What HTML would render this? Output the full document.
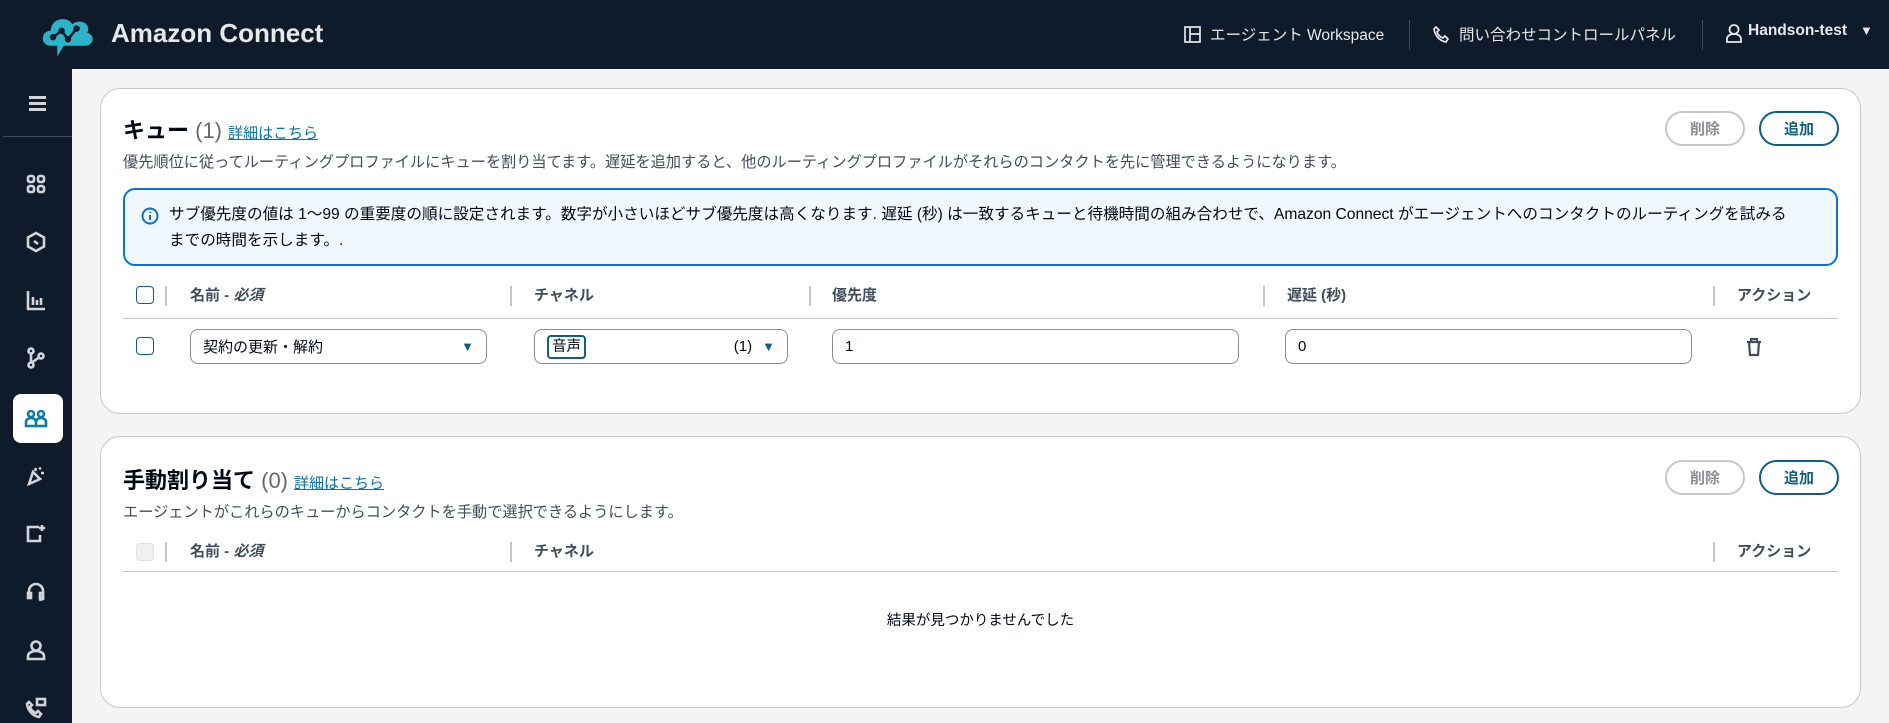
<!DOCTYPE html>
<html><head><meta charset="utf-8"><style>
*{box-sizing:border-box;margin:0;padding:0}
body{width:1889px;height:723px;overflow:hidden;background:#f4f4f4;font-family:"Liberation Sans","Noto Sans CJK JP",sans-serif;color:#000716;position:relative}
.a{position:absolute;white-space:nowrap}
#hdr{left:0;top:0;width:1889px;height:69px;background:#0f1b2a}
#side{left:0;top:69px;width:72px;height:654px;background:#0f1b2a}
.ic{position:absolute;left:24px;width:24px;height:24px}
.card{background:#fff;border:1px solid #c6c6cd;border-radius:20px}
.h2{font-size:22px;font-weight:bold}
.cnt{font-weight:normal;color:#656871}
.lnk{font-size:15px;color:#0972a8;text-decoration:underline;font-weight:normal;margin-left:6px}
.desc{font-size:15.2px;color:#414d5c}
.btn{border-radius:20px;font-size:15px;font-weight:bold;display:flex;align-items:center;justify-content:center;height:35px;width:80px}
.th{font-size:15px;font-weight:bold;color:#414d5c}
.sep{width:2px;height:20px;background:#c6c6cd}
.inp{border:1px solid #8c8c94;border-radius:8px;height:35px;font-size:15px;padding:0 12px;display:flex;align-items:center}
.cb{width:18px;height:18px;border:1.5px solid #0f5f7e;border-radius:4px}
</style></head><body>
<div id="hdr" class="a">
 <svg class="a" style="left:38px;top:8px" width="60" height="54" viewBox="0 0 56 48"><path d="M12 34 C2 34 2 20 12 20 C12 8 28 6 32 14 C40 8 50 14 46 22 C54 24 52 34 44 34 L24 34 L18 44 L18 34 Z" fill="#2bb4c6"/><path d="M14 26 L22 20 L28 28 L36 18" stroke="#0f1b2a" stroke-width="2.5" fill="none"/><circle cx="14" cy="26" r="3" fill="#0f1b2a"/><circle cx="22" cy="20" r="3" fill="#0f1b2a"/><circle cx="28" cy="28" r="3" fill="#0f1b2a"/><circle cx="36" cy="18" r="3" fill="#0f1b2a"/></svg>
 <div class="a" style="left:111px;top:18px;font-size:26px;font-weight:bold;color:#e6e8ea">Amazon Connect</div>
 <svg class="a" style="left:1184px;top:26px" width="17" height="17" viewBox="0 0 17 17" fill="none" stroke="#e6e8ea" stroke-width="1.7"><rect x="1" y="1" width="15" height="15"/><path d="M6 1v15M6 8h10"/></svg>
 <div class="a" style="left:1210px;top:23px;font-size:15.5px;color:#e6e8ea">エージェント Workspace</div>
 <div class="a" style="left:1409px;top:20px;width:1px;height:30px;background:#414d5c"></div>
 <svg class="a" style="left:1433px;top:26px" width="17" height="17" viewBox="0 0 17 17" fill="none" stroke="#e6e8ea" stroke-width="1.7"><path d="M3 1l3 3-2 2c1 3 3 5 6 6l2-2 3 3-2 3C7 15 2 10 1 3z"/></svg>
 <div class="a" style="left:1459px;top:23px;font-size:15.5px;color:#e6e8ea">問い合わせコントロールパネル</div>
 <div class="a" style="left:1702px;top:20px;width:1px;height:30px;background:#414d5c"></div>
 <svg class="a" style="left:1726px;top:24px" width="16" height="19" viewBox="0 0 16 19" fill="none" stroke="#e6e8ea" stroke-width="1.8"><circle cx="8" cy="5.5" r="4.5"/><path d="M1 18v-3c0-3 3-5 7-5s7 2 7 5v3z"/></svg>
 <div class="a" style="left:1748px;top:22px;font-size:15.5px;font-weight:bold;color:#e6e8ea">Handson-test</div>
 <div class="a" style="left:1860px;top:23px;font-size:13px;color:#e6e8ea">▼</div>
</div>
<div id="side" class="a">
 <div class="a" style="left:29px;top:27px;width:17px;height:2.5px;background:#d1d5db;box-shadow:0 6px 0 #d1d5db,0 12px 0 #d1d5db"></div>
 <div class="a" style="left:3px;top:67px;width:69px;height:1px;background:#414d5c"></div>
 <svg class="ic" style="top:103px" viewBox="0 0 24 24" fill="none" stroke="#d1d5db" stroke-width="2.6"><rect x="4" y="4" width="6" height="6" rx="2"/><rect x="14" y="4" width="6" height="6" rx="2"/><rect x="4" y="14" width="6" height="6" rx="2"/><rect x="14" y="14" width="6" height="6" rx="2"/></svg>
 <svg class="ic" style="top:161px" viewBox="0 0 24 24" fill="none" stroke="#d1d5db" stroke-width="2.6"><path d="M12 3l8 4.5v9L12 21l-8-4.5v-9z"/><path d="M10 11l4 3"/></svg>
 <svg class="ic" style="top:219px" viewBox="0 0 24 24" fill="none" stroke="#d1d5db" stroke-width="2.6"><path d="M4 3v18h17M9 17V9M13 17v-5M17 17v-7"/></svg>
 <svg class="ic" style="top:277px" viewBox="0 0 24 24" fill="none" stroke="#d1d5db" stroke-width="2.6"><circle cx="7" cy="5" r="2.5"/><circle cx="7" cy="19" r="2.5"/><circle cx="17" cy="10" r="2.5"/><path d="M7 7.5v9M15 11.5l-7 5"/></svg>
 <div class="a" style="left:13px;top:325px;width:50px;height:49px;background:#fff;border-radius:8px"></div>
 <svg class="ic" style="top:337px" viewBox="0 0 24 24" fill="none" stroke="#0f7ba0" stroke-width="2.6"><circle cx="7" cy="8" r="3"/><circle cx="17" cy="8" r="3"/><path d="M2 20v-4c0-2 2-4 5-4s5 2 5 4v4zM12 20v-4c0-2 2-4 5-4s5 2 5 4v4z"/></svg>
 <svg class="ic" style="top:395px" viewBox="0 0 24 24" fill="none" stroke="#d1d5db" stroke-width="2.6"><path d="M5 20l4-12 7 7zM12 4l-1 3M17 9h3M15 5l2-1"/></svg>
 <svg class="ic" style="top:453px" viewBox="0 0 24 24" fill="none" stroke="#d1d5db" stroke-width="2.6"><path d="M15 5H4v14h12v-6"/><path d="M18 3v6M15 6h6"/></svg>
 <svg class="ic" style="top:511px" viewBox="0 0 24 24" fill="none" stroke="#d1d5db" stroke-width="2.6"><path d="M5 17v-6a7 7 0 0114 0v8l-4 1"/><rect x="4" y="13" width="3" height="5"/><rect x="16" y="13" width="3" height="5"/></svg>
 <svg class="ic" style="top:569px" viewBox="0 0 24 24" fill="none" stroke="#d1d5db" stroke-width="2.6"><circle cx="12" cy="8" r="4.5"/><path d="M4 21v-3c0-3 4-5 8-5s8 2 8 5v3z"/></svg>
 <svg class="ic" style="top:627px" viewBox="0 0 24 24" fill="none" stroke="#d1d5db" stroke-width="2.6"><path d="M5 6l3 3-2 2c1 3 3 5 6 6l2-2 3 3-2 3C9 20 4 15 3 8z"/><rect x="13" y="3" width="8" height="6"/></svg>
</div>

<div class="a card" style="left:100px;top:88px;width:1761px;height:326px"></div>
<div class="a h2" style="left:123px;top:113px">キュー <span class="cnt">(1)</span><span class="lnk">詳細はこちら</span></div>
<div class="a btn" style="left:1665px;top:111px;border:2px solid #c6c6cd;color:#8c8c94">削除</div>
<div class="a btn" style="left:1759px;top:111px;border:2px solid #0f5f7e;color:#0f5f7e">追加</div>
<div class="a desc" style="left:123px;top:150px">優先順位に従ってルーティングプロファイルにキューを割り当てます。遅延を追加すると、他のルーティングプロファイルがそれらのコンタクトを先に管理できるようになります。</div>
<div class="a" style="left:123px;top:188px;width:1715px;height:78px;border:2px solid #0972d3;border-radius:12px;background:#f0f8fd"></div>
<svg class="a" style="left:141px;top:207px" width="18" height="18" viewBox="0 0 18 18" fill="none" stroke="#0972d3" stroke-width="2"><circle cx="9" cy="9" r="7.5"/><path d="M9 8v5M9 5v1"/></svg>
<div class="a" style="left:169px;top:202px;font-size:15.6px;line-height:26px;color:#000716">サブ優先度の値は 1～99 の重要度の順に設定されます。数字が小さいほどサブ優先度は高くなります. 遅延 (秒) は一致するキューと待機時間の組み合わせで、Amazon Connect がエージェントへのコンタクトのルーティングを試みる<br>までの時間を示します。.</div>

<div class="a cb" style="left:136px;top:286px"></div>
<div class="a sep" style="left:165px;top:286px"></div>
<div class="a th" style="left:190px;top:284px">名前 - <i>必須</i></div>
<div class="a sep" style="left:510px;top:286px"></div>
<div class="a th" style="left:534px;top:284px">チャネル</div>
<div class="a sep" style="left:809px;top:286px"></div>
<div class="a th" style="left:832px;top:284px">優先度</div>
<div class="a sep" style="left:1263px;top:286px"></div>
<div class="a th" style="left:1287px;top:284px">遅延 (秒)</div>
<div class="a sep" style="left:1713px;top:286px"></div>
<div class="a th" style="left:1737px;top:284px">アクション</div>
<div class="a" style="left:123px;top:318px;width:1715px;height:1px;background:#c6c6cd"></div>

<div class="a cb" style="left:136px;top:337px"></div>
<div class="a inp" style="left:190px;top:329px;width:297px">契約の更新・解約<span style="margin-left:auto;color:#0f5f7e;font-size:13px">▼</span></div>
<div class="a inp" style="left:534px;top:329px;width:254px;padding-left:12px"><span style="border:2px solid #0f5f7e;border-radius:4px;padding:0 3px;font-size:14.5px;line-height:20px">音声</span><span style="margin-left:auto">(1)</span><span style="margin-left:10px;color:#0f5f7e;font-size:13px">▼</span></div>
<div class="a inp" style="left:832px;top:329px;width:407px">1</div>
<div class="a inp" style="left:1285px;top:329px;width:407px">0</div>
<svg class="a" style="left:1745px;top:337px" width="18" height="20" viewBox="0 0 18 20" fill="none" stroke="#414d5c" stroke-width="2.2"><path d="M2 5h14M6 5V2h6v3M4 5l1 13h8l1-13"/></svg>

<div class="a card" style="left:100px;top:436px;width:1761px;height:272px"></div>
<div class="a h2" style="left:123px;top:463px">手動割り当て <span class="cnt">(0)</span><span class="lnk">詳細はこちら</span></div>
<div class="a btn" style="left:1665px;top:460px;border:2px solid #c6c6cd;color:#8c8c94">削除</div>
<div class="a btn" style="left:1759px;top:460px;border:2px solid #0f5f7e;color:#0f5f7e">追加</div>
<div class="a desc" style="left:123px;top:500px">エージェントがこれらのキューからコンタクトを手動で選択できるようにします。</div>
<div class="a" style="left:136px;top:543px;width:18px;height:18px;border-radius:4px;background:#f0f0f2;border:1px solid #e0e0e4"></div>
<div class="a sep" style="left:165px;top:542px"></div>
<div class="a th" style="left:190px;top:540px">名前 - <i>必須</i></div>
<div class="a sep" style="left:510px;top:542px"></div>
<div class="a th" style="left:534px;top:540px">チャネル</div>
<div class="a sep" style="left:1713px;top:542px"></div>
<div class="a th" style="left:1737px;top:540px">アクション</div>
<div class="a" style="left:123px;top:571px;width:1715px;height:1px;background:#c6c6cd"></div>
<div class="a" style="left:123px;top:609px;width:1715px;text-align:center;font-size:14.5px">結果が見つかりませんでした</div>
</body></html>
